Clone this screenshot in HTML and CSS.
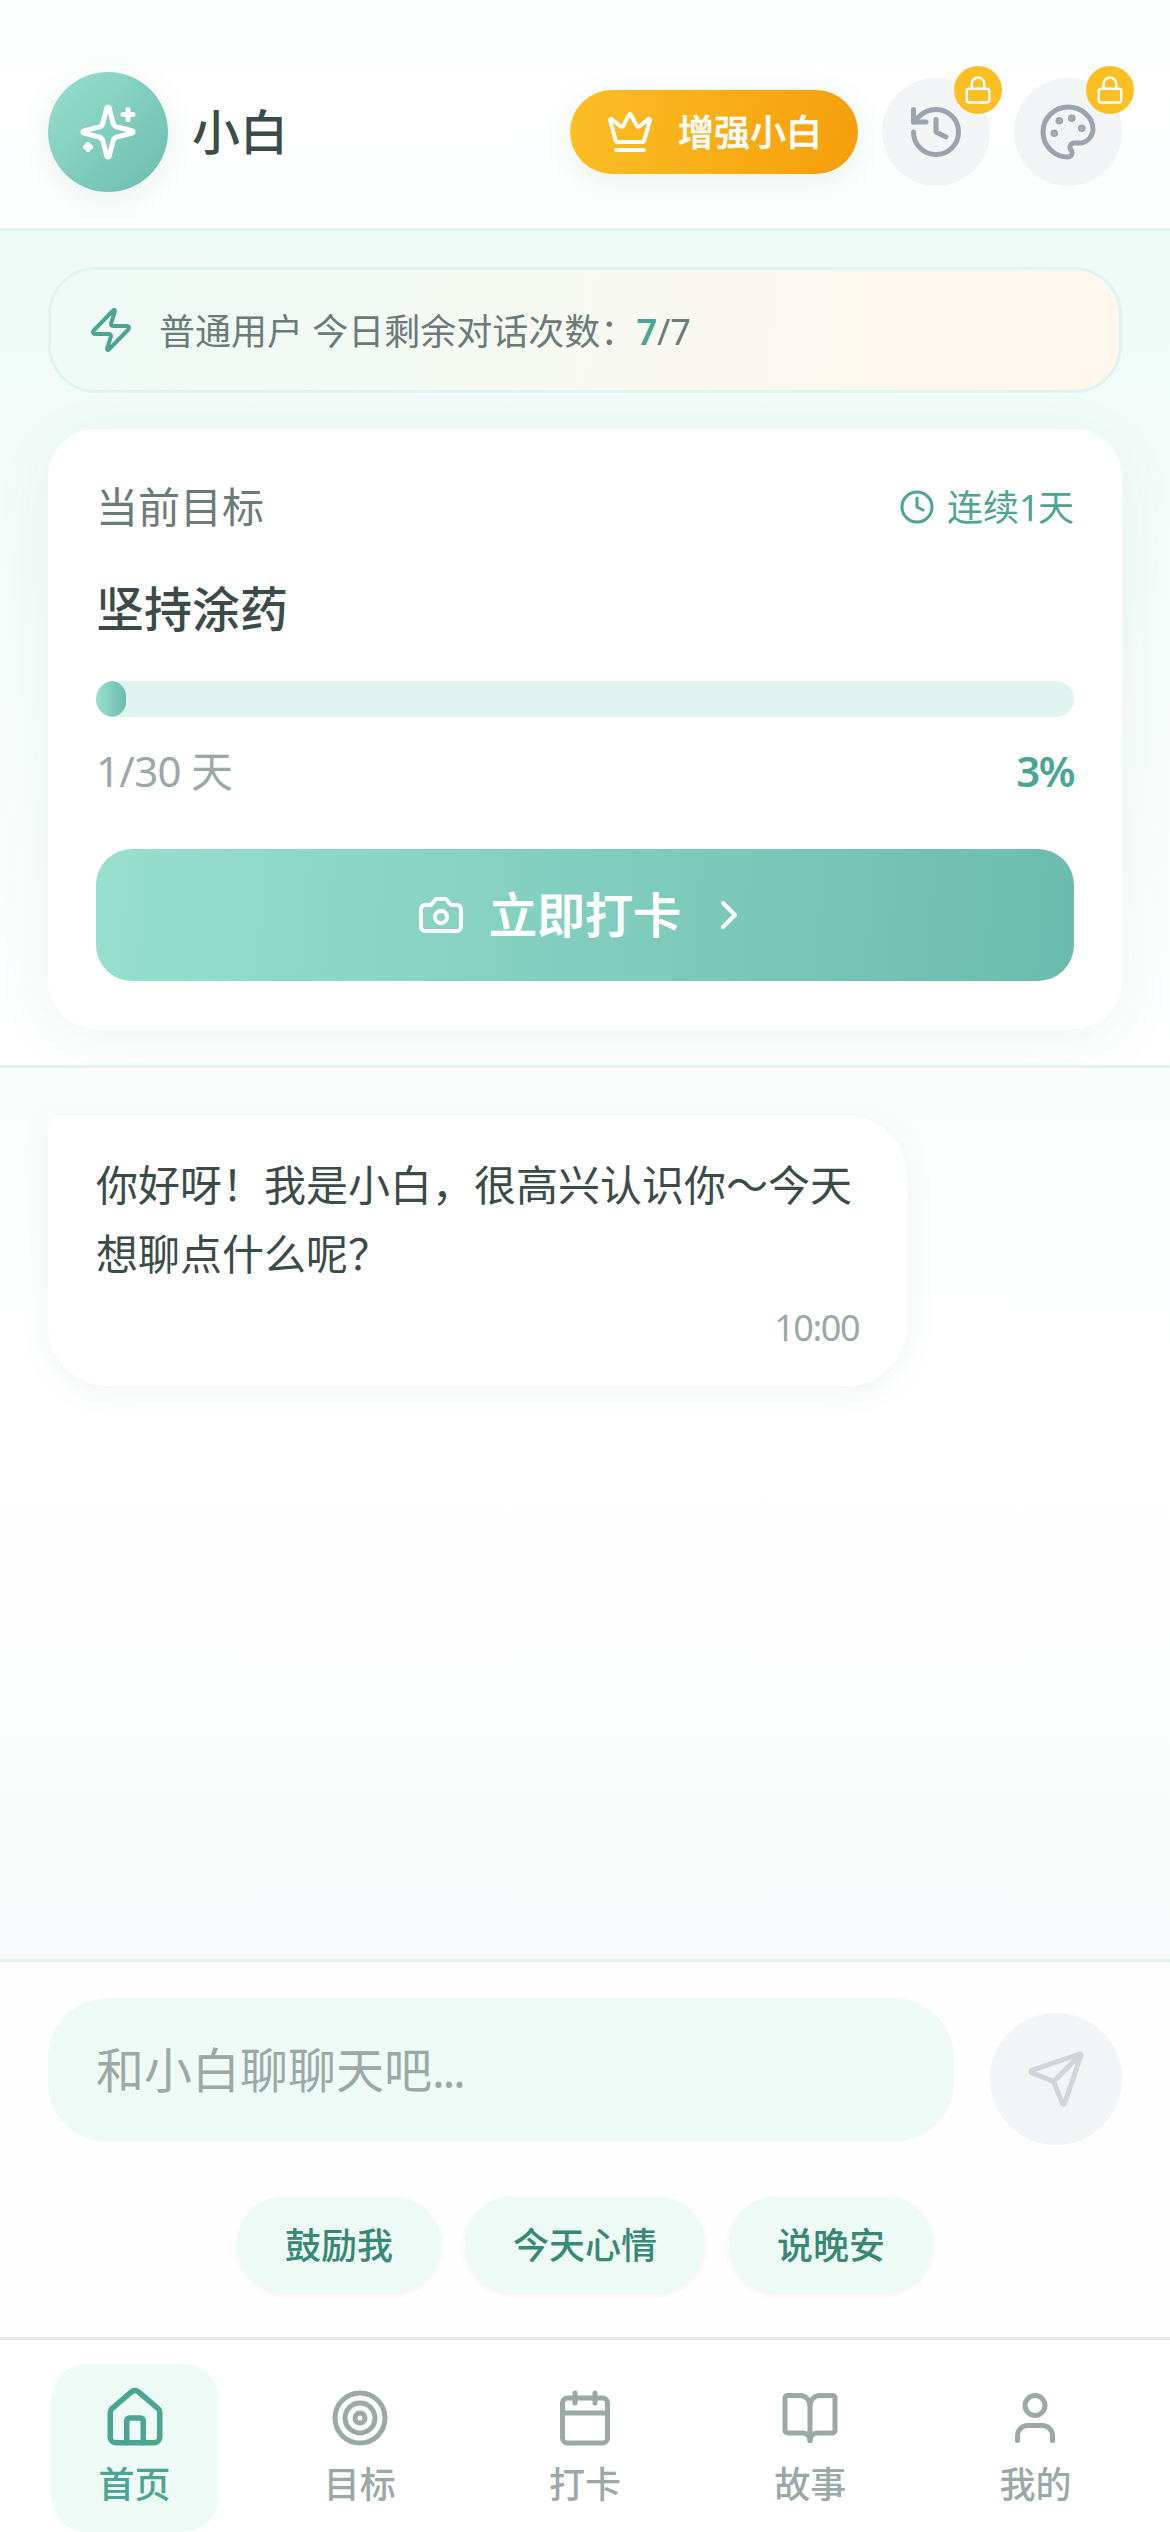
FILE: index.html
```html
<!DOCTYPE html>
<html lang="zh-CN">
<head>
<meta charset="utf-8">
<title>小白</title>
<link rel="stylesheet" href="styles.css">
</head>
<body>
<div class="app">
  <header class="header">
    <div class="brand">
      <div class="avatar">
        <svg class="icon icon-60" viewBox="0 0 24 24"><path d="M9.937 15.5A2 2 0 0 0 8.5 14.063l-6.135-1.582a.5.5 0 0 1 0-.962L8.5 9.936A2 2 0 0 0 9.937 8.5l1.582-6.135a.5.5 0 0 1 .963 0L14.063 8.5A2 2 0 0 0 15.5 9.937l6.135 1.581a.5.5 0 0 1 0 .964L15.5 14.063a2 2 0 0 0-1.437 1.437l-1.582 6.135a.5.5 0 0 1-.963 0z"/><path d="M20 3v4M22 5h-4M4 17v2M5 18H3"/></svg>
      </div>
      <h1 class="name">小白</h1>
    </div>
    <div class="actions">
      <button class="upgrade">
        <svg class="icon icon-48" viewBox="0 0 24 24"><path d="M11.562 3.266a.5.5 0 0 1 .876 0L15.39 8.87a1 1 0 0 0 1.516.294L21.183 5.5a.5.5 0 0 1 .798.519l-2.834 10.246a1 1 0 0 1-.956.734H5.81a1 1 0 0 1-.957-.734L2.02 6.02a.5.5 0 0 1 .798-.519l4.276 3.664a1 1 0 0 0 1.516-.294zM5 21h14"/></svg>
        <span>增强小白</span>
      </button>
      <button class="tool">
        <svg class="icon icon-60" viewBox="0 0 24 24"><path d="M3 12a9 9 0 1 0 9-9 9.75 9.75 0 0 0-6.74 2.74L3 8"/><path d="M3 3v5h5M12 7v5l4 2"/></svg>
        <span class="lock"><svg class="icon icon-30" viewBox="0 0 24 24"><rect x="3" y="11" width="18" height="11" rx="2"/><path d="M7 11V7a5 5 0 0 1 10 0v4"/></svg></span>
      </button>
      <button class="tool">
        <svg class="icon icon-60" viewBox="0 0 24 24"><circle class="dot" cx="13.5" cy="6.5" r=".5"/><circle class="dot" cx="17.5" cy="10.5" r=".5"/><circle class="dot" cx="8.5" cy="7.5" r=".5"/><circle class="dot" cx="6.5" cy="12.5" r=".5"/><path d="M12 2C6.500 2 2 6.500 2 12s4.500 10 10 10c.926 0 1.648-.746 1.648-1.688 0-.437-.18-.835-.437-1.125-.29-.289-.438-.652-.438-1.125a1.640 1.640 0 0 1 1.668-1.668h1.996c3.051 0 5.555-2.503 5.555-5.554C21.965 6.012 17.461 2 12 2z"/></svg>
        <span class="lock"><svg class="icon icon-30" viewBox="0 0 24 24"><rect x="3" y="11" width="18" height="11" rx="2"/><path d="M7 11V7a5 5 0 0 1 10 0v4"/></svg></span>
      </button>
    </div>
  </header>

  <section class="overview">
    <div class="quota">
      <svg class="icon icon-48" viewBox="0 0 24 24"><path d="M4 14a1 1 0 0 1-.78-1.630l9.900-10.200a.5.5 0 0 1 .860.460l-1.920 6.020A1 1 0 0 0 13 10h7a1 1 0 0 1 .780 1.630l-9.900 10.200a.5.5 0 0 1-.860-.460l1.920-6.020A1 1 0 0 0 11 14z"/></svg>
      <p class="quota-text">普通用户 今日剩余对话次数：<b>7</b>/7</p>
    </div>
    <div class="goal">
      <div class="goal-head">
        <span class="goal-label">当前目标</span>
        <span class="streak">
          <svg class="icon icon-36" viewBox="0 0 24 24"><circle cx="12" cy="12" r="10"/><path d="M12 6v6l4 2"/></svg>
          <span>连续<span class="streak-count">1</span>天</span>
        </span>
      </div>
      <h2 class="goal-title">坚持涂药</h2>
      <div class="progress"><div class="progress-fill" style="width: 3.1%"></div></div>
      <div class="progress-info"><span class="days">1/30 天</span><span class="percent">3%</span></div>
      <button class="checkin">
        <svg class="icon icon-48" viewBox="0 0 24 24"><path d="M14.500 4h-5L7 7H4a2 2 0 0 0-2 2v9a2 2 0 0 0 2 2h16a2 2 0 0 0 2-2V9a2 2 0 0 0-2-2h-3l-2.500-3z"/><circle cx="12" cy="13" r="3"/></svg>
        <span>立即打卡</span>
        <svg class="icon icon-48" viewBox="0 0 24 24"><path d="m9 18 6-6-6-6"/></svg>
      </button>
    </div>
  </section>

  <main class="chat">
    <div class="bubble">
      <p class="message">你好呀！我是小白，很高兴认识你～今天想聊点什么呢？</p>
      <time class="time">10:00</time>
    </div>
  </main>

  <section class="composer">
    <div class="compose-row">
      <div class="field">和小白聊聊天吧<span class="dots">...</span></div>
      <button class="send">
        <svg class="icon icon-60" viewBox="0 0 24 24"><path d="M14.536 21.686a.5.5 0 0 0 .937-.024l6.500-19a.496.496 0 0 0-.635-.635l-19 6.500a.5.5 0 0 0-.024.937l7.930 3.180a2 2 0 0 1 1.112 1.110z"/><path d="m21.854 2.147-10.940 10.939"/></svg>
      </button>
    </div>
    <div class="chips">
      <button class="chip">鼓励我</button>
      <button class="chip">今天心情</button>
      <button class="chip">说晚安</button>
    </div>
  </section>

  <nav class="tabs">
    <a class="tab active">
      <svg class="icon icon-60" viewBox="0 0 24 24"><path d="M15 21v-8a1 1 0 0 0-1-1h-4a1 1 0 0 0-1 1v8"/><path d="M3 10a2 2 0 0 1 .709-1.528l7-5.999a2 2 0 0 1 2.582 0l7 5.999A2 2 0 0 1 21 10v9a2 2 0 0 1-2 2H5a2 2 0 0 1-2-2z"/></svg>
      <span>首页</span>
    </a>
    <a class="tab">
      <svg class="icon icon-60" viewBox="0 0 24 24"><circle cx="12" cy="12" r="10"/><circle cx="12" cy="12" r="6"/><circle cx="12" cy="12" r="2"/></svg>
      <span>目标</span>
    </a>
    <a class="tab">
      <svg class="icon icon-60" viewBox="0 0 24 24"><path d="M8 2v4M16 2v4M3 10h18"/><rect x="3" y="4" width="18" height="18" rx="2"/></svg>
      <span>打卡</span>
    </a>
    <a class="tab">
      <svg class="icon icon-60" viewBox="0 0 24 24"><path d="M12 7v14"/><path d="M3 18a1 1 0 0 1-1-1V4a1 1 0 0 1 1-1h5a4 4 0 0 1 4 4 4 4 0 0 1 4-4h5a1 1 0 0 1 1 1v13a1 1 0 0 1-1 1h-6a3 3 0 0 0-3 3 3 3 0 0 0-3-3z"/></svg>
      <span>故事</span>
    </a>
    <a class="tab">
      <svg class="icon icon-60" viewBox="0 0 24 24"><path d="M19 21v-2a4 4 0 0 0-4-4H9a4 4 0 0 0-4 4v2"/><circle cx="12" cy="7" r="4"/></svg>
      <span>我的</span>
    </a>
  </nav>
</div>
</body>
</html>
```
FILE: styles.css
```css
* { box-sizing: border-box; margin: 0; padding: 0; }

:root {
  --mint-50: #eefaf6;
  --mint-100: #dff4ee;
  --mint-500: #4aa592;
  --mint-700: #378975;
  --mint-start: #98dfcd;
  --mint-end: #6bbcae;
  --ink: #3c4b48;
  --ink-soft: #6b7b78;
  --ink-faint: #9ba9a6;
}

body {
  font-family: "Noto Sans", "Noto Sans CJK SC", sans-serif;
  color: var(--ink);
  line-height: 1.5;
}

button { border: 0; font: inherit; color: inherit; }

.app {
  display: flex;
  flex-direction: column;
  width: 1170px;
  height: 2532px;
  overflow: hidden;
  background: #fff;
}

.icon {
  display: block;
  flex: none;
  fill: none;
  stroke: currentColor;
  stroke-width: 2;
  stroke-linecap: round;
  stroke-linejoin: round;
}
.icon-30 { width: 30px; height: 30px; }
.icon-36 { width: 36px; height: 36px; }
.icon-48 { width: 48px; height: 48px; }
.icon-60 { width: 60px; height: 60px; }
.dot { fill: currentColor; }

/* Header */
.header {
  display: flex;
  flex: none;
  align-items: center;
  justify-content: space-between;
  height: 231px;
  padding: 72px 48px 36px;
  border-bottom: 3px solid var(--mint-100);
  background: linear-gradient(180deg, #fbfefd 0, #fdfefe 66px, #fff 67px, #fdfefe 100%);
}
.brand, .actions { display: flex; align-items: center; gap: 24px; }
.avatar {
  display: grid;
  place-items: center;
  width: 120px;
  height: 120px;
  border-radius: 50%;
  color: #fff;
  background: linear-gradient(135deg, var(--mint-start), var(--mint-end));
  box-shadow: 0 6px 30px rgba(60, 110, 105, .1);
}
.name { font-size: 48px; font-weight: 500; line-height: 72px; }
.upgrade {
  display: flex;
  align-items: center;
  gap: 24px;
  height: 84px;
  padding: 0 36px;
  border-radius: 42px;
  color: #fff;
  font-size: 36px;
  font-weight: 500;
  -webkit-text-stroke: .5px currentColor;
  background: linear-gradient(100deg, #fbbf24, #f59e0b);
  box-shadow: 0 6px 30px rgba(60, 110, 105, .1);
}
.upgrade span { padding-top: 2px; }
.tool {
  position: relative;
  display: grid;
  place-items: center;
  width: 108px;
  height: 108px;
  border-radius: 50%;
  color: #9ca3af;
  background: #f3f4f6;
}
.lock {
  position: absolute;
  top: -12px;
  right: -12px;
  display: grid;
  place-items: center;
  width: 48px;
  height: 48px;
  border-radius: 50%;
  color: #fff;
  background: #fbbf24;
}

/* Quota and goal */
.overview {
  display: flex;
  flex: none;
  flex-direction: column;
  gap: 36px;
  height: 837px;
  padding: 36px 48px;
  border-bottom: 3px solid var(--mint-100);
  background: linear-gradient(180deg, var(--mint-50), #fff);
  overflow: hidden;
}
.quota {
  display: flex;
  flex: none;
  align-items: center;
  gap: 24px;
  height: 126px;
  padding: 0 36px;
  border: 3px solid var(--mint-100);
  border-radius: 48px;
  color: var(--mint-500);
  background: linear-gradient(95deg, var(--mint-50), #fff7ed);
}
.quota-text { padding-top: 4px; color: var(--ink-soft); font-size: 36px; }
.quota-text b { color: var(--mint-500); font-weight: 600; }
.goal {
  display: flex;
  flex: none;
  flex-direction: column;
  height: 600px;
  padding: 48px;
  border-radius: 48px;
  background: #fff;
  box-shadow: 0 12px 60px rgba(60, 110, 105, .07);
}
.goal-head, .progress-info { display: flex; align-items: center; justify-content: space-between; }
.goal-label { color: var(--ink-soft); font-size: 42px; line-height: 60px; }
.streak { display: flex; align-items: center; gap: 12px; color: var(--mint-500); font-size: 36px; line-height: 54px; }
.streak > span { padding-top: 2px; }
.streak-count { letter-spacing: -1.5px; }
.goal-title { margin-top: 36px; font-size: 48px; font-weight: 500; line-height: 72px; }
.progress {
  flex: none;
  height: 36px;
  margin-top: 36px;
  border-radius: 18px;
  background: var(--mint-100);
  overflow: hidden;
}
.progress-fill { height: 100%; border-radius: 18px; background: linear-gradient(90deg, var(--mint-start), var(--mint-end)); }
.progress-info { margin-top: 24px; color: var(--ink-faint); font-size: 42px; line-height: 60px; }
.days { letter-spacing: -.7px; }
.percent { color: var(--mint-500); font-weight: 600; letter-spacing: -1.5px; }
.checkin {
  display: flex;
  align-items: center;
  justify-content: center;
  gap: 24px;
  height: 132px;
  margin-top: auto;
  border-radius: 36px;
  color: #fff;
  font-size: 48px;
  font-weight: 500;
  -webkit-text-stroke: .7px currentColor;
  background: linear-gradient(95deg, var(--mint-start), var(--mint-end));
}

/* Conversation */
.chat {
  flex: 1;
  padding: 48px;
  background: linear-gradient(180deg, #fbfdfd, #fff 35%, #fefefe 60%, #f8fbfb);
}
.bubble {
  width: 80%;
  height: 270px;
  padding: 34px 48px;
  border-radius: 12px 60px 60px 60px;
  background: #fff;
  box-shadow: 0 6px 30px rgba(60, 110, 105, .08);
}
.message { font-size: 42px; line-height: 69px; }
.time { display: block; margin-top: 16px; color: var(--ink-faint); font-size: 36px; line-height: 48px; letter-spacing: -1.4px; text-align: right; }

/* Composer */
.composer {
  flex: none;
  height: 378px;
  padding: 36px 48px 45px;
  border-top: 3px solid var(--mint-100);
  background: #fefefe;
}
.compose-row { display: flex; align-items: flex-end; gap: 36px; height: 147px; }
.field {
  flex: 1;
  align-self: flex-start;
  height: 144px;
  padding: 36px 48px;
  border-radius: 60px;
  color: var(--ink-faint);
  font-size: 48px;
  line-height: 72px;
  background: var(--mint-50);
}
.dots { letter-spacing: -2.4px; }
.send {
  display: grid;
  place-items: center;
  width: 132px;
  height: 132px;
  border-radius: 50%;
  color: #d1d5db;
  background: #f3f4f6;
}
.chips { display: flex; justify-content: center; gap: 24px; margin-top: 51px; }
.chip {
  height: 96px;
  padding: 3px 48px 0;
  border-radius: 48px;
  color: var(--mint-700);
  font-size: 36px;
  font-weight: 500;
  background: var(--mint-50);
  box-shadow: 0 3px 6px rgba(0, 0, 0, .05);
}

/* Tab bar */
.tabs {
  display: grid;
  flex: none;
  grid-template-columns: repeat(5, 1fr);
  justify-items: center;
  height: 195px;
  padding: 24px 22px 0;
  border-top: 3px solid #e5e9ed;
  background: #fff;
}
.tab {
  display: flex;
  flex-direction: column;
  align-items: center;
  gap: 13px;
  width: 168px;
  height: 168px;
  padding-top: 24px;
  border-radius: 36px;
  color: var(--ink-faint);
  font-size: 36px;
  font-weight: 500;
  line-height: 48px;
}
.active { color: var(--mint-500); background: var(--mint-50); }
.active .icon { transform: scale(1.1); }
```
